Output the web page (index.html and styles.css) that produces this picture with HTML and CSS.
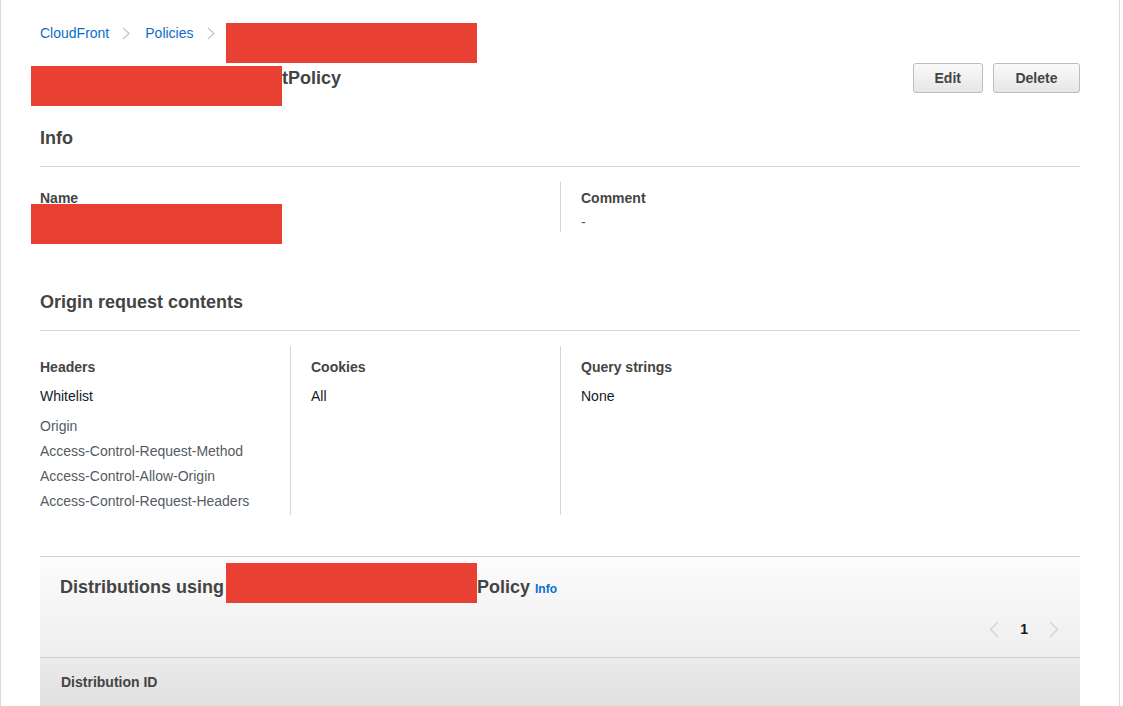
FILE: index.html
```html
<!DOCTYPE html>
<html lang="en">
<head>
    <meta charset="UTF-8">
    <meta name="viewport" content="width=device-width, initial-scale=1.0">
    <title>CloudFront - Policies</title>
    <link rel="stylesheet" href="styles.css">
</head>
<body>
    <div class="page">
        <div class="breadcrumb">
            <a href="#">CloudFront</a>
            <svg class="crumb-sep" width="8" height="13" viewBox="0 0 8 13"><polyline points="1,1 7,6.5 1,12" fill="none" stroke="#c4c8c8" stroke-width="1.4"/></svg>
            <a href="#">Policies</a>
            <svg class="crumb-sep" width="8" height="13" viewBox="0 0 8 13"><polyline points="1,1 7,6.5 1,12" fill="none" stroke="#c4c8c8" stroke-width="1.4"/></svg>
            <span class="redact redact-crumb"></span>
        </div>

        <div class="title-row">
            <h1><span class="redact redact-title"></span>tPolicy</h1>
            <div class="actions">
                <button>Edit</button>
                <button>Delete</button>
            </div>
        </div>

        <h2 class="section-title">Info</h2>
        <div class="kv kv-info">
            <div class="kv-col">
                <div class="kv-label">Name</div>
                <div class="kv-value"><span class="redact redact-name"></span></div>
            </div>
            <div class="kv-col">
                <div class="kv-label">Comment</div>
                <div class="kv-value muted">-</div>
            </div>
        </div>

        <h2 class="section-title section-origin">Origin request contents</h2>
        <div class="kv kv-origin">
            <div class="kv-col">
                <div class="kv-label">Headers</div>
                <div class="kv-value">Whitelist</div>
                <ul class="header-list">
                    <li>Origin</li>
                    <li>Access-Control-Request-Method</li>
                    <li>Access-Control-Allow-Origin</li>
                    <li>Access-Control-Request-Headers</li>
                </ul>
            </div>
            <div class="kv-col">
                <div class="kv-label">Cookies</div>
                <div class="kv-value">All</div>
            </div>
            <div class="kv-col">
                <div class="kv-label">Query strings</div>
                <div class="kv-value">None</div>
            </div>
        </div>

        <div class="table-panel">
            <div class="panel-header">
                <h3>Distributions using <span class="redact redact-dist"></span>Policy <a class="info-link" href="#">Info</a></h3>
                <div class="pager">
                    <svg width="10" height="17" viewBox="0 0 10 17"><polyline points="9,1 1.5,8.5 9,16" fill="none" stroke="#cfd3d3" stroke-width="1.4"/></svg>
                    <span class="page-num">1</span>
                    <svg width="10" height="17" viewBox="0 0 10 17"><polyline points="1,1 8.5,8.5 1,16" fill="none" stroke="#cfd3d3" stroke-width="1.4"/></svg>
                </div>
            </div>
            <div class="table-head">
                <div class="th">Distribution ID</div>
            </div>
        </div>
    </div>
</body>
</html>
```

FILE: styles.css
```css
body {
    margin: 0;
    padding: 0;
    font-family: "Liberation Sans", Arial, sans-serif;
    font-size: 14px;
    color: #16191f;
    background: #fff;
}

.page {
    width: 1040px;
    min-height: 706px;
    padding: 0 39px 0 39px;
    border-left: 1px solid #d5dbdb;
    border-right: 1px solid #d5dbdb;
    box-sizing: content-box;
}

.redact {
    display: inline-block;
    background-color: #e94034;
}

/* breadcrumb */
.breadcrumb {
    padding-top: 23px;
    height: 20px;
    line-height: 20px;
    display: flex;
    align-items: center;
    white-space: nowrap;
}

.breadcrumb a {
    color: #0a6ecb;
    text-decoration: none;
}

.crumb-sep {
    margin: 0 15px 0 13px;
}

.redact-crumb {
    width: 251px;
    height: 40px;
    margin-top: 19px;
    margin-bottom: -1px;
    margin-left: -4px;
}

/* title */
.title-row {
    margin-top: 20px;
    height: 30px;
    display: flex;
    justify-content: space-between;
    align-items: center;
}

h1 {
    margin: 0;
    font-size: 18px;
    font-weight: bold;
    color: #444;
    line-height: 24px;
    white-space: nowrap;
}

.redact-title {
    width: 251px;
    height: 40px;
    margin-left: -9px;
    vertical-align: top;
    margin-top: 0;
    margin-bottom: -16px;
}

.actions {
    display: flex;
    gap: 10px;
}

.actions button {
    font-family: "Liberation Sans", Arial, sans-serif;
    font-size: 14px;
    font-weight: bold;
    color: #444;
    height: 30px;
    padding: 0 21px;
    border: 1px solid #bcbcbc;
    border-radius: 3px;
    background: linear-gradient(#fafafa, #e6e6e6);
    cursor: pointer;
}

.actions button:last-child {
    padding: 0 21.5px;
}

/* sections */
.section-title {
    margin: 33px 0 0;
    padding-bottom: 16px;
    font-size: 18px;
    line-height: 24px;
    font-weight: bold;
    color: #444;
    border-bottom: 1px solid #d5d5d5;
}

.section-origin {
    margin-top: 58px;
}

.kv {
    display: grid;
    margin-top: 15px;
}

.kv-info {
    grid-template-columns: 520px 1fr;
}

.kv-origin {
    grid-template-columns: 250px 270px 1fr;
}

.kv-col + .kv-col {
    border-left: 1px solid #d5d5d5;
    padding-left: 20px;
}

.kv-label {
    font-weight: bold;
    color: #444;
    line-height: 20px;
}

.kv-info .kv-label {
    padding-top: 6px;
}

.kv-value {
    line-height: 20px;
    position: relative;
}

.kv-info .kv-value {
    margin-top: 4px;
    height: 20px;
}

.kv-origin .kv-label {
    padding-top: 11px;
}

.kv-origin .kv-value {
    margin-top: 9px;
}

.muted {
    color: #545b64;
}

.redact-name {
    position: absolute;
    left: -9px;
    top: -8px;
    width: 251px;
    height: 40px;
}

.header-list {
    list-style: none;
    margin: 8px 0 0;
    padding: 0 0 1px;
    font-size: 14px;
    line-height: 25px;
    color: #545b64;
}

/* distributions table */
.table-panel {
    margin-top: 41px;
    border-top: 1px solid #cfcfcf;
}

.panel-header {
    height: 101px;
    padding: 18px 20px 0;
    box-sizing: border-box;
    background: linear-gradient(#fcfcfc, #eeeeee);
    border-bottom: 1px solid #cfcfcf;
}

.panel-header h3 {
    margin: 0;
    font-size: 18px;
    line-height: 24px;
    font-weight: bold;
    color: #444;
    white-space: nowrap;
}

.redact-dist {
    width: 251px;
    height: 40px;
    margin-left: -3px;
    vertical-align: top;
    margin-top: -12px;
    margin-bottom: -4px;
}

.info-link {
    font-size: 12px;
    color: #0a6ecb;
    text-decoration: none;
}

.pager {
    margin-top: 18px;
    display: flex;
    justify-content: flex-end;
    align-items: center;
    gap: 21px;
    height: 20px;
    padding-right: 1px;
}

.page-num {
    font-weight: bold;
    font-size: 14px;
    color: #16191f;
}

.table-head {
    height: 49px;
    background: linear-gradient(#ebebeb, #e0e0e0);
    padding: 14px 21px 0;
    box-sizing: border-box;
}

.th {
    font-weight: bold;
    color: #444;
    line-height: 20px;
}
```
